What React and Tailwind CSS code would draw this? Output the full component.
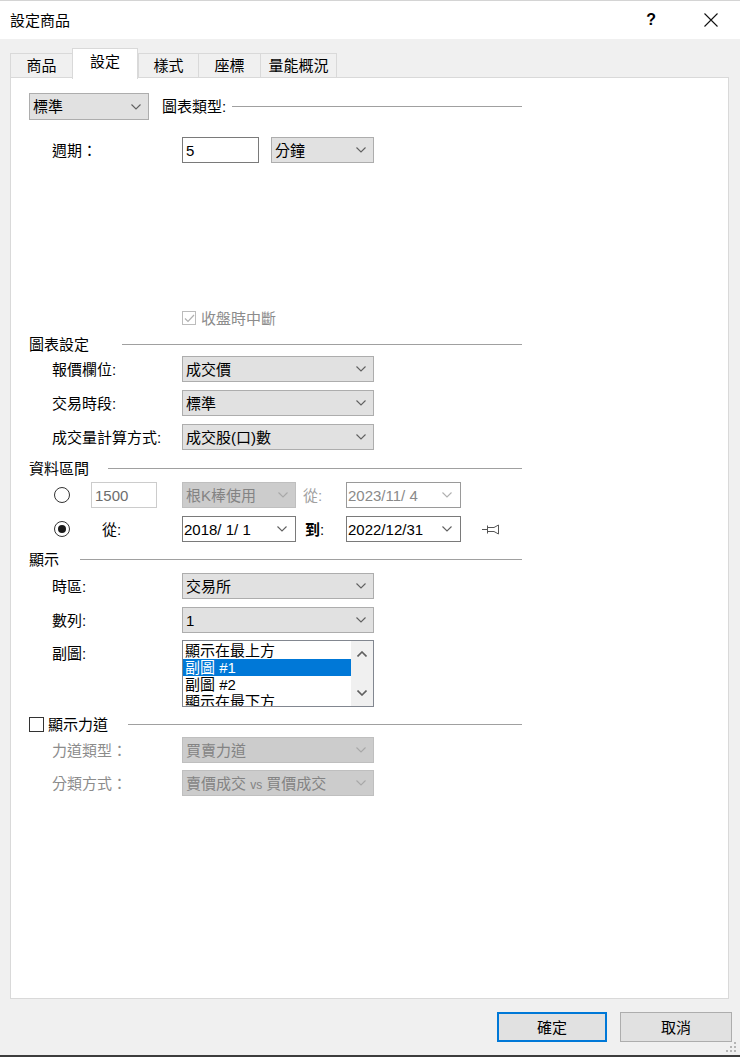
const font = "font-['Liberation_Sans','Noto_Sans_CJK_TC',sans-serif]";

function Chevron({ color = "#606060" }) {
  return (
    <svg width="10" height="6" viewBox="0 0 10 6" className="shrink-0">
      <path d="M0.5 0.5 L5 5 L9.5 0.5" fill="none" stroke={color} strokeWidth="1.1" />
    </svg>
  );
}

function Combo({ value, className, disabled }) {
  return (
    <div
      className={
        "h-[26px] flex items-center justify-between pl-[3px] pr-[7px] border " +
        (disabled
          ? "bg-[#cccccc] border-[#bfbfbf] text-[#838383] "
          : "bg-[#e1e1e1] border-[#adadad] text-black ") +
        className
      }
    >
      <span className="whitespace-nowrap leading-none">{value}</span>
      <Chevron color={disabled ? "#a8a8a8" : "#606060"} />
    </div>
  );
}

function DateBox({ value, className, disabled }) {
  return (
    <div
      className={
        "h-[26px] flex items-center justify-between pl-px pr-[8px] bg-white border " +
        (disabled ? "border-[#9a9a9a] text-[#8a8a8a] " : "border-[#7a7a7a] text-black ") +
        className
      }
    >
      <span className="whitespace-pre leading-none">{value}</span>
      <Chevron color={disabled ? "#b0b0b0" : "#606060"} />
    </div>
  );
}

function Heading({ text, lineGap, children }) {
  return (
    <div className="ml-[18px] w-[493px] h-[20px] flex items-center">
      {children}
      <span className="leading-none whitespace-nowrap">{text}</span>
      <div className={"flex-1 h-px bg-[#a0a0a0] " + lineGap} />
    </div>
  );
}

function Row({ label, muted, className = "", children }) {
  return (
    <div className={"ml-[41px] flex items-center " + className}>
      <span className={"w-[130px] leading-none whitespace-nowrap " + (muted ? "text-[#8c8c8c]" : "")}>
        {label}
      </span>
      {children}
    </div>
  );
}

function Radio({ checked }) {
  return (
    <div className="w-[16px] h-[16px] rounded-full border border-[#333] flex items-center justify-center bg-white">
      {checked && <div className="w-[8px] h-[8px] rounded-full bg-[#1a1a1a]" />}
    </div>
  );
}

function Pin() {
  return (
    <svg width="18" height="12" viewBox="0 0 18 12">
      <g fill="none" stroke="#555" strokeWidth="1">
        <path d="M0 6.5 H5" />
        <path d="M5.5 2.5 V10.5" />
        <path d="M5.5 4.5 H12 M5.5 8.5 H12" />
        <path d="M12 4.5 L16.5 2 V11 L12 8.5" />
      </g>
    </svg>
  );
}

function Tab({ text, w, selected }) {
  if (selected) {
    return (
      <div className={"relative z-10 h-[31px] bg-white border-t border-l border-r border-[#d9d9d9] flex justify-center pt-[5px] " + w}>
        <span className="leading-none">{text}</span>
      </div>
    );
  }
  return (
    <div className={"h-[26px] border-t border-l border-r border-[#d9d9d9] flex justify-center pt-[4px] -mr-px " + w}>
      <span className="leading-none">{text}</span>
    </div>
  );
}

const listItems = ["顯示在最上方", "副圖 #1", "副圖 #2", "顯示在最下方"];

export default function App() {
  return (
    <div className={"relative w-[740px] h-[1057px] bg-[#f0f0f0] flex flex-col text-[15px] text-black overflow-hidden " + font}>
      {/* title bar */}
      <div className="h-[39px] bg-white border-t border-[#d4d4d4] flex items-center pl-[10px] shrink-0">
        <span className="leading-none">設定商品</span>
        <span className="ml-auto leading-none text-[16px] font-bold">?</span>
        <svg width="16" height="16" viewBox="0 0 16 16" className="ml-[47px] mr-[21px]">
          <path d="M1.5 1.5 L14.5 14.5 M14.5 1.5 L1.5 14.5" stroke="#111" strokeWidth="1.1" />
        </svg>
      </div>

      {/* tabs */}
      <div className="mt-[9px] ml-[10px] h-[31px] flex items-end">
        <Tab text="商品" w="w-[63px]" />
        <Tab text="設定" w="w-[66px]" selected />
        <Tab text="樣式" w="w-[61px]" />
        <Tab text="座標" w="w-[63px]" />
        <Tab text="量能概況" w="w-[77px]" />
      </div>

      {/* panel */}
      <div className="-mt-[2px] ml-[10px] w-[719px] h-[922px] bg-white border border-[#d9d9d9] flex flex-col pt-[15px] shrink-0">
        <div className="ml-[18px] w-[493px] h-[27px] flex items-center">
          <Combo value="標準" className="w-[120px] h-[27px]" />
          <span className="ml-[13px] leading-none whitespace-nowrap">圖表類型:</span>
          <div className="flex-1 h-px bg-[#a0a0a0] ml-[6px]" />
        </div>

        <Row label="週期：" className="mt-[17px] h-[26px]">
          <div className="w-[77px] h-[26px] bg-white border border-[#7a7a7a] flex items-center pl-[3px]">
            <span className="leading-none">5</span>
          </div>
          <Combo value="分鐘" className="ml-[12px] w-[103px]" />
        </Row>

        <div className="mt-[147px] ml-[171px] h-[16px] flex items-center">
          <div className="w-[14px] h-[14px] border border-[#bcbcbc] flex items-center justify-center">
            <svg width="11" height="9" viewBox="0 0 11 9">
              <path d="M1 4.5 L4 7.5 L10 1" fill="none" stroke="#b0b0b0" strokeWidth="1.2" />
            </svg>
          </div>
          <span className="ml-[5px] leading-none text-[#8c8c8c]">收盤時中斷</span>
        </div>

        <div className="mt-[8px]">
          <Heading text="圖表設定" lineGap="ml-[33px]" />
        </div>
        <Row label="報價欄位:" className="mt-[2px]">
          <Combo value="成交價" className="w-[192px]" />
        </Row>
        <Row label="交易時段:" className="mt-[8px]">
          <Combo value="標準" className="w-[192px]" />
        </Row>
        <Row label="成交量計算方式:" className="mt-[8px]">
          <Combo value="成交股(口)數" className="w-[192px]" />
        </Row>

        <div className="mt-[8px]">
          <Heading text="資料區間" lineGap="ml-[19px]" />
        </div>
        <div className="mt-[4px] ml-[43px] h-[26px] flex items-center">
          <Radio />
          <div className="ml-[21px] w-[66px] h-[26px] bg-white border border-[#cccccc] flex items-center pl-[3px] text-[#6d6d6d]">
            <span className="leading-none">1500</span>
          </div>
          <Combo value="根K棒使用" className="ml-[25px] w-[114px]" disabled />
          <span className="ml-[7px] w-[43px] leading-none text-[#a0a0a0]">從:</span>
          <DateBox value="2023/11/ 4" className="w-[115px]" disabled />
        </div>
        <div className="mt-[8px] ml-[43px] h-[26px] flex items-center">
          <Radio checked />
          <span className="ml-[32px] w-[80px] leading-none">從:</span>
          <DateBox value="2018/ 1/ 1" className="w-[114px]" />
          <span className="ml-[9px] w-[41px] leading-none">
            <span className="font-semibold">到</span>:
          </span>
          <DateBox value="2022/12/31" className="w-[115px]" />
          <div className="ml-[21px] flex items-center">
            <Pin />
          </div>
        </div>

        <div className="mt-[7px]">
          <Heading text="顯示" lineGap="ml-[21px]" />
        </div>
        <Row label="時區:" className="mt-[4px]">
          <Combo value="交易所" className="w-[192px]" />
        </Row>
        <Row label="數列:" className="mt-[8px]">
          <Combo value="1" className="w-[192px]" />
        </Row>
        <div className="mt-[7px] ml-[41px] flex items-start">
          <span className="w-[130px] pt-[6px] leading-none">副圖:</span>
          <div className="w-[192px] h-[67px] bg-white border border-[#828790] flex overflow-hidden">
            <div className="w-[168px] pt-px">
              {listItems.map((t, i) => (
                <div
                  key={t}
                  className={
                    "h-[17px] leading-[17px] pl-[2px] whitespace-nowrap " +
                    (i === 1 ? "bg-[#0078d7] text-white" : "")
                  }
                >
                  {t}
                </div>
              ))}
            </div>
            <div className="flex-1 bg-[#f0f0f0] flex flex-col items-center justify-between py-[10px]">
              <svg width="10" height="6" viewBox="0 0 10 6">
                <path d="M0.5 5.5 L5 1 L9.5 5.5" fill="none" stroke="#606060" strokeWidth="1.6" />
              </svg>
              <svg width="10" height="6" viewBox="0 0 10 6">
                <path d="M0.5 0.5 L5 5 L9.5 0.5" fill="none" stroke="#606060" strokeWidth="1.6" />
              </svg>
            </div>
          </div>
        </div>

        <div className="mt-[7px]">
          <Heading text="顯示力道" lineGap="ml-[20px]">
            <div className="w-[15px] h-[15px] border border-[#333] bg-white mr-[4px]" />
          </Heading>
        </div>
        <Row label="力道類型：" muted className="mt-[3px]">
          <Combo value="買賣力道" className="w-[192px]" disabled />
        </Row>
        <Row label="分類方式：" muted className="mt-[7px]">
          <Combo
            value={
              <>
                賣價成交 <span className="text-[12px]">vs</span> 買價成交
              </>
            }
            className="w-[192px]"
            disabled
          />
        </Row>
      </div>

      {/* buttons */}
      <div className="mt-[13px] flex justify-end pr-[8px] gap-[13px]">
        <div className="w-[110px] h-[30px] bg-[#e1e1e1] border-2 border-[#0078d7] flex items-center justify-center">
          <span className="leading-none">確定</span>
        </div>
        <div className="w-[112px] h-[30px] bg-[#e1e1e1] border border-[#adadad] flex items-center justify-center">
          <span className="leading-none">取消</span>
        </div>
      </div>

      <svg width="10" height="10" viewBox="0 0 10 10" className="absolute right-[4px] bottom-[5px]">
        <g fill="#b5b5b5">
          <rect x="8" y="0" width="2" height="2" />
          <rect x="4" y="4" width="2" height="2" />
          <rect x="8" y="4" width="2" height="2" />
          <rect x="0" y="8" width="2" height="2" />
          <rect x="4" y="8" width="2" height="2" />
          <rect x="8" y="8" width="2" height="2" />
        </g>
      </svg>

      <div className="mt-auto h-[2px] bg-[#3c3c3c] shrink-0" />
    </div>
  );
}
